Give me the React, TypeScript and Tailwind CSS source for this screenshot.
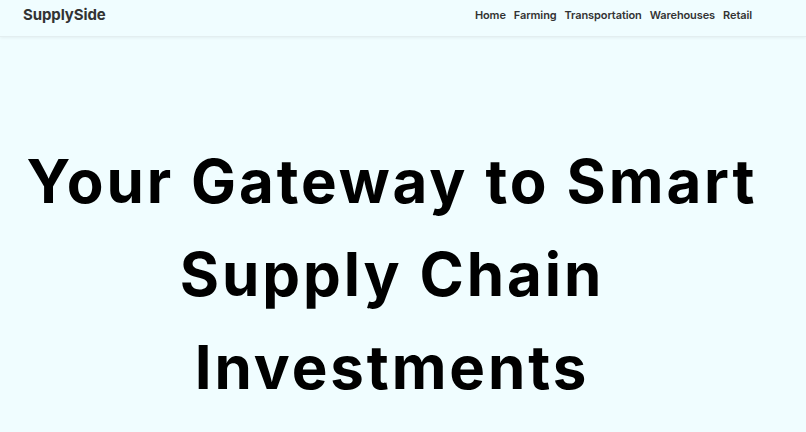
export default function App() {
  return (
    <div className="min-h-screen bg-[#f0fdff] font-['Inter','Noto_Sans',sans-serif]">
      <header className="flex h-[37px] items-center justify-between border-b border-[#e3eef0] pb-[5px] pl-[23px] pr-[54px] shadow-[0_1px_3px_rgba(0,0,0,0.06)]">
        <a className="text-[15px] font-bold tracking-[-0.1px] text-[#333]">SupplySide</a>
        <nav className="flex gap-[8px] text-[11px] font-semibold tracking-[-0.1px] text-[#333]">
          <a>Home</a>
          <a>Farming</a>
          <a>Transportation</a>
          <a>Warehouses</a>
          <a>Retail</a>
        </nav>
      </header>
      <main className="pr-[22px] pt-[98px]">
        <h1 className="text-center text-[60px] font-bold leading-[93px] tracking-[2.9px] text-black">
          Your Gateway to Smart
          <br />
          Supply Chain
          <br />
          Investments
        </h1>
      </main>
    </div>
  );
}
